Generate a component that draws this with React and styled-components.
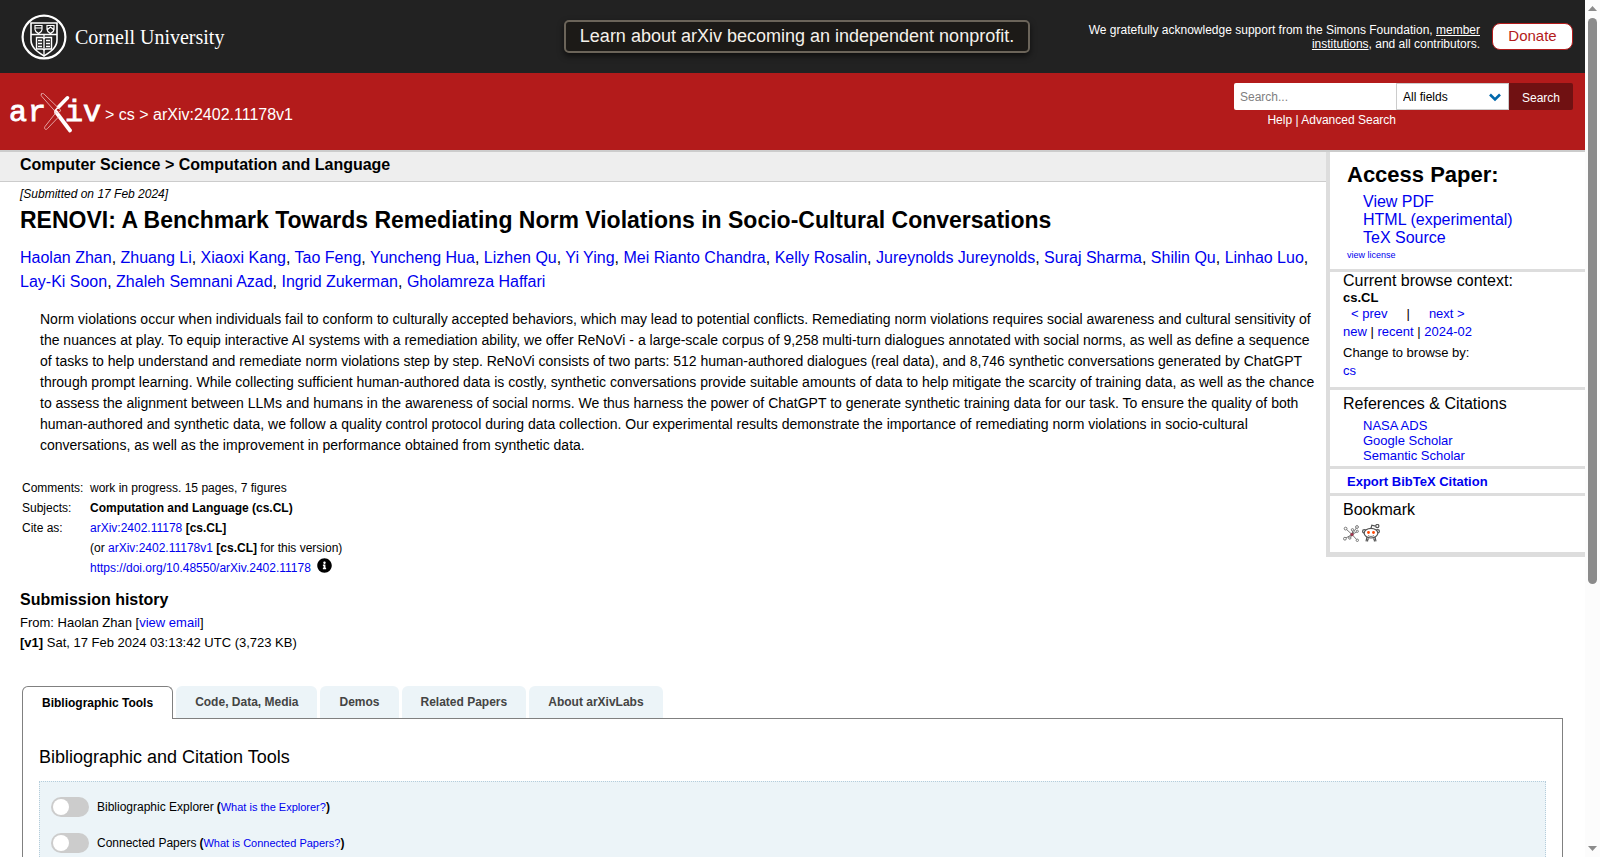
import styled, { createGlobalStyle } from 'styled-components';
import { FaInfoCircle } from 'react-icons/fa';

const GlobalStyle = createGlobalStyle`
    * {
        box-sizing: border-box;
    }

    body {
        margin: 0;
        background: #fff;
        color: #000;
        font-family: 'Liberation Sans', Arial, sans-serif;
        font-size: 13px;
        line-height: 18px;
    }

    h1, h2, h3, p, ul, blockquote {
        margin: 0;
        padding: 0;
    }

    ul {
        list-style: none;
    }

    a {
        color: #0000ee;
        text-decoration: none;
    }

    input, select, button {
        font-family: inherit;
    }
`;

const Shell = styled.div`
    display: flex;
    height: 100vh;
    overflow: hidden;
`;

const Page = styled.div`
    flex: 1;
    min-width: 0;
    overflow: hidden;
`;

/* ---------- header ---------- */

const TopBar = styled.header`
    display: grid;
    grid-template-columns: 1fr auto 1fr;
    align-items: center;
    height: 73px;
    padding: 0 12px 0 21px;
    background: #222;
    color: #fff;
`;

const University = styled.a`
    display: flex;
    align-items: center;
    gap: 8px;
    color: #fff;
    font-family: 'Liberation Serif', serif;
    font-size: 20px;
    line-height: 24px;
`;

const Banner = styled.a`
    padding: 0 14px;
    border: 2px solid #6b6459;
    border-radius: 5px;
    background: #1c1a17;
    box-shadow: 0 3px 6px rgba(0, 0, 0, 0.6);
    color: #f4f1ea;
    font-size: 18px;
    line-height: 29px;
`;

const Support = styled.div`
    display: flex;
    align-items: center;
    justify-content: flex-end;
    gap: 12px;
`;

const Thanks = styled.p`
    max-width: 400px;
    font-size: 12px;
    line-height: 14px;
    text-align: right;

    a {
        color: #fff;
        text-decoration: underline;
    }
`;

const Donate = styled.a`
    width: 81px;
    padding-bottom: 2px;
    border: 1px solid #b31b1b;
    border-radius: 8px;
    background: #fff;
    color: #b31b1b;
    font-size: 15px;
    line-height: 23px;
    text-align: center;
`;

const RedBar = styled.div`
    display: flex;
    align-items: flex-start;
    justify-content: space-between;
    height: 79px;
    padding: 10px 12px 0 8px;
    border-bottom: 2px solid #ccc;
    background: #b31b1b;
    color: #fff;

    a {
        color: #fff;
    }
`;

const Crumbs = styled.nav`
    display: flex;
    align-items: center;
    gap: 4px;
    padding-top: 10px;
    font-size: 16px;
    line-height: 20px;

    svg {
        display: block;
    }
`;

const SearchForm = styled.form`
    display: grid;
    grid-template-columns: 162px 113px 64px;
    font-size: 12px;
    line-height: 20px;
`;

const SearchInput = styled.input`
    min-width: 0;
    height: 27px;
    padding: 0 6px;
    border: 0;
    border-radius: 2px 0 0 2px;
    background: #fff;
    font-size: 12px;

    &::placeholder {
        color: #808080;
    }
`;

const SelectWrap = styled.div`
    display: grid;
    align-items: center;

    > * {
        grid-area: 1 / 1;
    }

    svg {
        justify-self: end;
        margin: 2px 8px 0 0;
        pointer-events: none;
    }
`;

const FieldSelect = styled.select`
    appearance: none;
    width: 100%;
    height: 27px;
    padding: 0 6px;
    border: 1px solid #ccc;
    border-radius: 0;
    background: #fff;
    color: #000;
    font-size: 12px;
`;

const SearchButton = styled.button`
    height: 27px;
    padding: 2px 0 0;
    border: 0;
    border-radius: 0 2px 2px 0;
    background: #701112;
    color: #fff;
    font-size: 12px;
`;

const SearchHelp = styled.p`
    justify-self: end;
    white-space: nowrap;
`;

/* ---------- paper ---------- */

const Columns = styled.div`
    display: grid;
    grid-template-columns: minmax(0, 1fr) 259px;
    align-items: start;
`;

const Subject = styled.h2`
    padding: 0 20px 3px;
    border-bottom: 1px solid #ccc;
    background: #eee;
    font-size: 16px;
    line-height: 26px;
`;

const Paper = styled.article`
    padding: 0 8px 0 20px;
`;

const Dateline = styled.p`
    font-size: 12px;
    font-style: italic;
    line-height: 24px;
`;

const Title = styled.h1`
    font-size: 23px;
    line-height: 28px;
`;

const Authors = styled.p`
    margin-top: 12px;
    font-size: 16px;
    line-height: 24px;
`;

const Abstract = styled.blockquote`
    margin: 15px 0 0 20px;
    font-size: 14px;
    line-height: 21px;
`;

const Meta = styled.table`
    margin: 22px 0 0 2px;
    border-collapse: collapse;
    font-size: 12px;
    line-height: 20px;

    th, td {
        padding: 0;
        text-align: left;
        font-weight: 400;
    }

    th {
        width: 68px;
    }

    svg {
        display: inline-block;
        height: 15px;
        margin-left: 6px;
        vertical-align: -1px;
    }
`;

const HistoryTitle = styled.h2`
    margin-top: 9px;
    font-size: 16px;
    line-height: 26px;
`;

const HistoryLine = styled.p`
    line-height: 20px;
`;

/* ---------- sidebar ---------- */

const Sidebar = styled.aside`
    border-left: 4px solid #ddd;
    border-bottom: 5px solid #ddd;
`;

const Block = styled.section`
    padding: ${p => p.$pad};
    border-bottom: ${p => (p.$last ? 0 : 3)}px solid #ddd;
`;

const AccessTitle = styled.h2`
    font-size: 22px;
    line-height: 28px;
`;

const BlockTitle = styled.h3`
    font-size: 16px;
    font-weight: 400;
    line-height: 18px;
`;

const LinkList = styled.ul`
    padding: ${p => p.$pad};
    font-size: ${p => p.$size}px;
    line-height: ${p => p.$line}px;
`;

const License = styled.p`
    font-size: 9px;
    line-height: 11px;
`;

const ContextName = styled.p`
    font-weight: 700;
    line-height: 15px;
`;

const PrevNext = styled.p`
    display: flex;
    gap: 19px;
    padding-left: 8px;
`;

const ChangeTo = styled.p`
    padding-top: 3px;
`;

const Export = styled.a`
    display: block;
    font-weight: 700;
    line-height: 22px;
`;

const Bookmarks = styled.div`
    display: flex;
    gap: 3px;
    padding-top: 5px;

    svg {
        display: block;
    }
`;

/* ---------- labs ---------- */

const Labs = styled.div`
    margin: 33px 22px 0;
`;

const Tabs = styled.div`
    display: flex;
    gap: 3px;
`;

const Tab = styled.button`
    height: ${p => (p.$active ? 33 : 32)}px;
    margin-bottom: ${p => (p.$active ? -1 : 0)}px;
    padding: 0 19px;
    border: ${p => (p.$active ? '1px solid #808080' : '0')};
    border-bottom: 0;
    border-radius: 6px 6px 0 0;
    background: ${p => (p.$active ? '#fff' : '#ecf4f8')};
    color: ${p => (p.$active ? '#000' : '#444')};
    font-size: 12px;
    font-weight: 700;
`;

const Panel = styled.div`
    padding: 26px 16px 40px;
    border: 1px solid #808080;
`;

const PanelTitle = styled.h2`
    font-size: 18px;
    font-weight: 400;
    line-height: 24px;
`;

const ToolBox = styled.div`
    display: flex;
    flex-direction: column;
    gap: 16px;
    margin-top: 12px;
    padding: 15px 11px;
    border: 1px dotted #b5cddb;
    background: #ecf4f8;
`;

const Tool = styled.div`
    display: flex;
    align-items: center;
    font-size: 12px;
    line-height: 20px;

    label {
        padding: 0 3px 0 8px;
    }

    a {
        font-size: 11px;
    }
`;

const Toggle = styled.input`
    appearance: none;
    display: flex;
    align-items: center;
    width: 38px;
    height: 20px;
    margin: 0;
    padding: 2px;
    border-radius: 10px;
    background: #ccc;

    &::before {
        content: '';
        width: 16px;
        height: 16px;
        border-radius: 50%;
        background: #fff;
    }

    &:checked {
        justify-content: flex-end;
        background: #1f5e96;
    }
`;

/* ---------- scroll rail ---------- */

const Rail = styled.div`
    display: flex;
    flex-direction: column;
    align-items: center;
    width: 15px;
    padding: 6px 0;
    background: #fcfcfc;

    svg {
        display: block;
        flex: none;
    }
`;

const Thumb = styled.div`
    width: 9px;
    height: 66vh;
    margin: 7px 0 auto;
    border-radius: 5px;
    background: #8b8b8b;
`;

const Seal = () => (
    <svg width="46" height="46" viewBox="0 0 46 46" fill="none" stroke="#fff" aria-hidden="true">
        <circle cx="23" cy="23" r="21.4" strokeWidth="2.2" />
        <path d="M10 9h26v17c0 8-7 12-13 16-6-4-13-8-13-16z" strokeWidth="1.6" />
        <path d="M10 20.500h26M23 20.500V42" strokeWidth="1.3" />
        <path d="M14 11.500h7v4c0 2-2 3-3.500 4-1.500-1-3.500-2-3.500-4zM14 14h7M26 11.500h7v4c0 2-2 3-3.500 4-1.500-1-3.500-2-3.500-4zM26.500 15.500l3-2.500 3 2.500" strokeWidth="1.2" />
        <path d="M15.500 23.500h6l1.500 1 1.500-1h6v11.500h-6l-1.500 1-1.500-1h-6z" strokeWidth="1.4" />
        <path d="M17 26.500h4M17 29.500h4M17 32.500h4M25 26.500h4M25 29.500h4M25 32.500h4" strokeWidth="1.3" />
    </svg>
);

const ArxivLogo = () => (
    <svg width="93" height="43" viewBox="-2 0 93 43" role="img" aria-label="arXiv">
        <g fill="#fff" stroke="#fff" strokeWidth="0.9" fontFamily="'Liberation Mono', monospace" fontSize="30">
            <text x="-1" y="28">a</text>
            <text x="18" y="28">r</text>
            <text x="55" y="28">i</text>
            <text x="73" y="28">v</text>
        </g>
        <g fill="none" strokeLinecap="round">
            <path d="M57.500 4.800L48.500 14" stroke="#fff" strokeWidth="3.600" />
            <path d="M46 19L60 37.500" stroke="#fff" strokeWidth="3.800" />
            <path d="M45 17.500L48.500 14" stroke="#fff" strokeWidth="1.500" />
            <path d="M31.700.8c-1 .7-.8 1.500 0 2.500L47 20.500l4-3L34.200 1.200c-1-.9-1.700-1-2.500-.4z" stroke="#f0c4c4" strokeWidth="0.8" />
            <path d="M46 19.500L35 33.500c-.8 1.200-.5 2.200.3 2.700.9.500 1.600 0 2.400-.9L49.500 23" stroke="#f0c4c4" strokeWidth="0.8" />
        </g>
    </svg>
);

const Chevron = () => (
    <svg width="12" height="9" viewBox="0 0 12 9" fill="none" stroke="#0068ac" strokeWidth="2.600" aria-hidden="true">
        <path d="M1 1.500l5 5 5-5" />
    </svg>
);

const BibSonomy = () => (
    <svg width="16" height="18" viewBox="0 0 16 18" fill="#fff" stroke="#777" strokeWidth="1" role="img" aria-label="BibSonomy">
        <path d="M2.500 4.500L9 10.500l5-7.500M9 10.500L2 14.500M9 10.500l5.500 6M9 10.500L7 14.500M9.500 6v4M9 10.500l5.500-3" fill="none" />
        <circle cx="2.600" cy="4.600" r="1.400" />
        <circle cx="14" cy="3" r="1.400" />
        <circle cx="9.500" cy="5.800" r="1.200" />
        <circle cx="14.300" cy="7.300" r="1.100" />
        <circle cx="1.900" cy="14.700" r="1.400" />
        <circle cx="6.800" cy="14" r="1.200" />
        <circle cx="14.300" cy="16.300" r="1.200" />
        <circle cx="9" cy="10.500" r="1.300" fill="#b03050" stroke="#904050" />
    </svg>
);

const Reddit = () => (
    <svg width="18" height="18" viewBox="0 0 18 18" fill="none" stroke="#555" strokeWidth="1.200" role="img" aria-label="Reddit">
        <path d="M5 13l-1 4.300M13 13l1 4.300M6.500 14.500c-.8.800-1 1.800-1 3M11.500 14.500c.8.800 1 1.800 1 3M9 4.500l.8-3.300 3.700 1" />
        <circle cx="15.300" cy="2" r="1.600" fill="#fff" />
        <circle cx="2.300" cy="7.300" r="1.700" fill="#fff" />
        <circle cx="15.700" cy="7.300" r="1.700" fill="#fff" />
        <ellipse cx="9" cy="9.200" rx="6.800" ry="4.800" fill="#fff" />
        <path d="M6 11.500c1.500 1.300 4.500 1.300 6 0" strokeWidth="0.8" />
        <circle cx="6.500" cy="8.500" r="1.400" fill="#ff4500" stroke="none" />
        <circle cx="11.500" cy="8.500" r="1.400" fill="#ff4500" stroke="none" />
    </svg>
);

const Arrow = ({ down }) => (
    <svg width="9" height="5" viewBox="0 0 9 5" fill="#8b8b8b" aria-hidden="true">
        <path d={down ? 'M0 0h9L4.500 5z' : 'M0 5h9L4.500 0z'} />
    </svg>
);

const authors = [
    'Haolan Zhan', 'Zhuang Li', 'Xiaoxi Kang', 'Tao Feng', 'Yuncheng Hua', 'Lizhen Qu', 'Yi Ying',
    'Mei Rianto Chandra', 'Kelly Rosalin', 'Jureynolds Jureynolds', 'Suraj Sharma', 'Shilin Qu',
    'Linhao Luo', 'Lay-Ki Soon', 'Zhaleh Semnani Azad', 'Ingrid Zukerman', 'Gholamreza Haffari',
];

const tabs = ['Bibliographic Tools', 'Code, Data, Media', 'Demos', 'Related Papers', 'About arXivLabs'];

const tools = [
    { id: 'explorer', name: 'Bibliographic Explorer', help: 'What is the Explorer?' },
    { id: 'connected', name: 'Connected Papers', help: 'What is Connected Papers?' },
];

const Header = () => (
    <>
        <TopBar>
            <University href="#"><Seal />Cornell University</University>
            <Banner href="#">Learn about arXiv becoming an independent nonprofit.</Banner>
            <Support>
                <Thanks>
                    We gratefully acknowledge support from the Simons Foundation, <a href="#">member institutions</a>, and all contributors.
                </Thanks>
                <Donate href="#">Donate</Donate>
            </Support>
        </TopBar>
        <RedBar>
            <Crumbs>
                <a href="#"><ArxivLogo /></a>
                <span>&gt; <a href="#">cs</a> &gt; arXiv:2402.11178v1</span>
            </Crumbs>
            <SearchForm>
                <SearchInput type="text" placeholder="Search..." aria-label="Search term or terms" />
                <SelectWrap>
                    <FieldSelect aria-label="Field to search">
                        <option>All fields</option>
                        <option>Title</option>
                        <option>Author</option>
                        <option>Abstract</option>
                    </FieldSelect>
                    <Chevron />
                </SelectWrap>
                <SearchButton type="button">Search</SearchButton>
                <SearchHelp><a href="#">Help</a> | <a href="#">Advanced Search</a></SearchHelp>
            </SearchForm>
        </RedBar>
    </>
);

const PaperDetails = () => (
    <main>
        <Subject>Computer Science &gt; Computation and Language</Subject>
        <Paper>
            <Dateline>[Submitted on 17 Feb 2024]</Dateline>
            <Title>RENOVI: A Benchmark Towards Remediating Norm Violations in Socio-Cultural Conversations</Title>
            <Authors>
                {authors.map((name, index) => (
                    <span key={name}>{index > 0 && ', '}<a href="#">{name}</a></span>
                ))}
            </Authors>
            <Abstract>
                Norm violations occur when individuals fail to conform to culturally accepted behaviors, which may lead to
                potential conflicts. Remediating norm violations requires social awareness and cultural sensitivity of the
                nuances at play. To equip interactive AI systems with a remediation ability, we offer ReNoVi - a large-scale
                corpus of 9,258 multi-turn dialogues annotated with social norms, as well as define a sequence of tasks to
                help understand and remediate norm violations step by step. ReNoVi consists of two parts: 512 human-authored
                dialogues (real data), and 8,746 synthetic conversations generated by ChatGPT through prompt learning. While
                collecting sufficient human-authored data is costly, synthetic conversations provide suitable amounts of data
                to help mitigate the scarcity of training data, as well as the chance to assess the alignment between LLMs
                and humans in the awareness of social norms. We thus harness the power of ChatGPT to generate synthetic
                training data for our task. To ensure the quality of both human-authored and synthetic data, we follow a
                quality control protocol during data collection. Our experimental results demonstrate the importance of
                remediating norm violations in socio-cultural conversations, as well as the improvement in performance
                obtained from synthetic data.
            </Abstract>
            <Meta>
                <tbody>
                    <tr><th scope="row">Comments:</th><td>work in progress. 15 pages, 7 figures</td></tr>
                    <tr><th scope="row">Subjects:</th><td><b>Computation and Language (cs.CL)</b></td></tr>
                    <tr><th scope="row">Cite as:</th><td><a href="#">arXiv:2402.11178</a> <b>[cs.CL]</b></td></tr>
                    <tr><th /><td>(or <a href="#">arXiv:2402.11178v1</a> <b>[cs.CL]</b> for this version)</td></tr>
                    <tr><th /><td><a href="#">https://doi.org/10.48550/arXiv.2402.11178</a><FaInfoCircle size={15} /></td></tr>
                </tbody>
            </Meta>
            <HistoryTitle>Submission history</HistoryTitle>
            <HistoryLine>From: Haolan Zhan [<a href="#">view email</a>]</HistoryLine>
            <HistoryLine><b>[v1]</b> Sat, 17 Feb 2024 03:13:42 UTC (3,723 KB)</HistoryLine>
        </Paper>
    </main>
);

const Extras = () => (
    <Sidebar>
        <Block $pad="9px 0 8px 17px">
            <AccessTitle>Access Paper:</AccessTitle>
            <LinkList $pad="4px 0 3px 16px" $size={16} $line={18}>
                <li><a href="#">View PDF</a></li>
                <li><a href="#">HTML (experimental)</a></li>
                <li><a href="#">TeX Source</a></li>
            </LinkList>
            <License><a href="#">view license</a></License>
        </Block>
        <Block $pad="0 0 7px 13px">
            <BlockTitle>Current browse context:</BlockTitle>
            <ContextName>cs.CL</ContextName>
            <PrevNext><a href="#">&lt; prev</a><span>|</span><a href="#">next &gt;</a></PrevNext>
            <p><a href="#">new</a> | <a href="#">recent</a> | <a href="#">2024-02</a></p>
            <ChangeTo>Change to browse by:</ChangeTo>
            <p><a href="#">cs</a></p>
        </Block>
        <Block $pad="5px 0 2px 13px">
            <BlockTitle>References &amp; Citations</BlockTitle>
            <LinkList $pad="5px 0 1px 20px" $size={13} $line={15}>
                <li><a href="#">NASA ADS</a></li>
                <li><a href="#">Google Scholar</a></li>
                <li><a href="#">Semantic Scholar</a></li>
            </LinkList>
        </Block>
        <Block $pad="2px 0 0 17px">
            <Export href="#">Export BibTeX Citation</Export>
        </Block>
        <Block $pad="5px 0 10px 13px" $last>
            <BlockTitle>Bookmark</BlockTitle>
            <Bookmarks>
                <a href="#"><BibSonomy /></a>
                <a href="#"><Reddit /></a>
            </Bookmarks>
        </Block>
    </Sidebar>
);

const LabsTools = () => (
    <Labs>
        <Tabs role="tablist">
            {tabs.map((tab, index) => (
                <Tab key={tab} type="button" role="tab" aria-selected={index === 0} $active={index === 0}>{tab}</Tab>
            ))}
        </Tabs>
        <Panel>
            <PanelTitle>Bibliographic and Citation Tools</PanelTitle>
            <ToolBox>
                {tools.map(tool => (
                    <Tool key={tool.id}>
                        <Toggle type="checkbox" id={tool.id} />
                        <label htmlFor={tool.id}>{tool.name}</label>
                        <b>(</b><a href="#">{tool.help}</a><b>)</b>
                    </Tool>
                ))}
            </ToolBox>
        </Panel>
    </Labs>
);

const App = () => (
    <>
        <GlobalStyle />
        <Shell>
            <Page>
                <Header />
                <Columns>
                    <PaperDetails />
                    <Extras />
                </Columns>
                <LabsTools />
            </Page>
            <Rail aria-hidden="true">
                <Arrow />
                <Thumb />
                <Arrow down />
            </Rail>
        </Shell>
    </>
);

export default App;
